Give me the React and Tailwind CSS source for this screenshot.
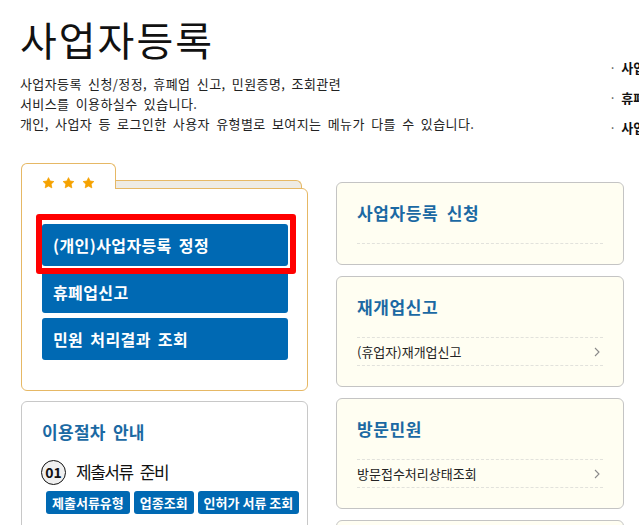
import React from "react";

function Star() {
  return (
    <svg width="13" height="12" viewBox="0 0 24 23" className="block">
      <path
        d="M12 1.2l3.1 6.6 7.2.9-5.3 5 1.4 7.1L12 17.3l-6.4 3.5 1.4-7.1-5.3-5 7.2-.9z"
        fill="#f5a200"
        stroke="#f5a200"
        strokeWidth="1.5"
        strokeLinejoin="round"
      />
    </svg>
  );
}

function Chevron() {
  return (
    <svg width="6" height="10" viewBox="0 0 6 10" className="block">
      <path d="M1 1l4 4-4 4" fill="none" stroke="#8a8a8a" strokeWidth="1.1" />
    </svg>
  );
}

function Card({ title, items }) {
  return (
    <div className="rounded-[6px] border border-[#c4c4c4] bg-[#fffef2] px-5 pt-[18px] pb-5">
      <div className="text-[17px] font-bold leading-[24px] tracking-[0.6px] text-[#1b69a3] [word-spacing:4px]">
        {title}
      </div>
      <div className="mt-[18px] border-t border-dashed border-[#e2e2dc]">
        {items.map((it) => (
          <div
            key={it}
            className="flex h-[28px] items-center justify-between border-b border-dashed border-[#e2e2dc] text-[13px] leading-[28px] text-[#222]"
          >
            <span>{it}</span>
            <span className="mr-[3px]">
              <Chevron />
            </span>
          </div>
        ))}
      </div>
    </div>
  );
}

const blueBtn =
  "flex h-[42px] items-center rounded-[3px] bg-[#0069b3] pl-[11px] text-[16px] font-bold tracking-[0.4px] text-white [word-spacing:3px]";
const smallBtn =
  "flex h-[23px] items-center rounded-[3px] bg-[#0069b3] px-[6px] text-[13px] font-bold text-white";

export default function App() {
  return (
    <div className="h-[525px] w-[639px] overflow-hidden bg-white font-['Noto_Sans_CJK_KR',sans-serif] text-[#111]">
      {/* header */}
      <div className="flex h-[134px] items-start">
        <div className="w-[609px] shrink-0 pl-5 pt-5">
          <h1 className="text-[40px] font-normal leading-[38px] tracking-[2px] text-[#111]">사업자등록</h1>
          <div className="mt-4 text-[13px] leading-[20px] tracking-[0.4px] text-[#222] [word-spacing:3px]">
            <p>사업자등록 신청/정정, 휴폐업 신고, 민원증명, 조회관련</p>
            <p>서비스를 이용하실수 있습니다.</p>
            <p>개인, 사업자 등 로그인한 사용자 유형별로 보여지는 메뉴가 다를 수 있습니다.</p>
          </div>
        </div>
        <ul className="shrink-0 whitespace-nowrap pt-[53px] text-[13px] font-bold leading-[30px] text-[#111]">
          <li>
            <span className="mr-[5px] font-normal text-[#555]">·</span>사업자등록 신청
          </li>
          <li>
            <span className="mr-[5px] font-normal text-[#555]">·</span>휴폐업 신고
          </li>
          <li>
            <span className="mr-[5px] font-normal text-[#555]">·</span>사업자등록증명
          </li>
        </ul>
      </div>

      {/* main */}
      <div className="ml-[21px] mt-[29px] flex gap-[28px]">
        {/* left column */}
        <div className="w-[287px] shrink-0">
          {/* folder */}
          <div className="flex items-end">
            <div className="relative z-10 -mb-px flex h-[26px] w-[95px] shrink-0 gap-[7px] rounded-t-[6px] border border-b-0 border-[#e6b865] bg-white pl-5 pt-[13px]">
              <Star />
              <Star />
              <Star />
            </div>
            <div className="-ml-px mr-[6px] h-[8px] flex-1 rounded-tr-[6px] border-t border-r border-[#e6b865] bg-[#eeebe4]" />
          </div>
          <div className="rounded-b-[6px] rounded-tr-[6px] border border-[#e6b865] bg-white pb-[30px] pl-5 pr-[19px] pt-[35px]">
            <div className="flex flex-col gap-[5px]">
              <div className="relative">
                <div className={blueBtn}>(개인)사업자등록 정정</div>
                <div className="pointer-events-none absolute -left-[6px] -right-[8px] -top-[10px] -bottom-[8px] rounded-[3px] border-[6px] border-[#ff0000]" />
              </div>
              <div className={blueBtn}>휴폐업신고</div>
              <div className={blueBtn}>민원 처리결과 조회</div>
            </div>
          </div>

          {/* procedure */}
          <div className="mt-[10px] h-[140px] rounded-[6px] border border-[#c8c8c8] bg-white pl-5 pt-[18px]">
            <div className="text-[17px] font-bold leading-[24px] tracking-[0.3px] text-[#1b69a3] [word-spacing:3px]">
              이용절차 안내
            </div>
            <div className="mt-[15px] flex h-[26px] items-center gap-[10px]">
              <div className="-ml-px flex h-[25px] w-[25px] items-center justify-center rounded-full border-[1.5px] border-[#111] bg-[#f0f0f0] text-[14px] font-bold leading-none text-[#111]">
                01
              </div>
              <div className="text-[17px] leading-[26px] tracking-[-1.5px] text-[#111] [word-spacing:5px]">
                제출서류 준비
              </div>
            </div>
            <div className="ml-[4px] mt-[6px] flex gap-[4px]">
              <div className={smallBtn}>제출서류유형</div>
              <div className={smallBtn}>업종조회</div>
              <div className={smallBtn}>인허가 서류 조회</div>
            </div>
          </div>
        </div>

        {/* right column */}
        <div className="mt-[19px] flex w-[288px] shrink-0 flex-col gap-[11px]">
          <Card title="사업자등록 신청" items={[]} />
          <Card title="재개업신고" items={["(휴업자)재개업신고"]} />
          <Card title="방문민원" items={["방문접수처리상태조회"]} />
          <Card title="전자신고" items={["사업자등록 신청"]} />
        </div>
      </div>
    </div>
  );
}
